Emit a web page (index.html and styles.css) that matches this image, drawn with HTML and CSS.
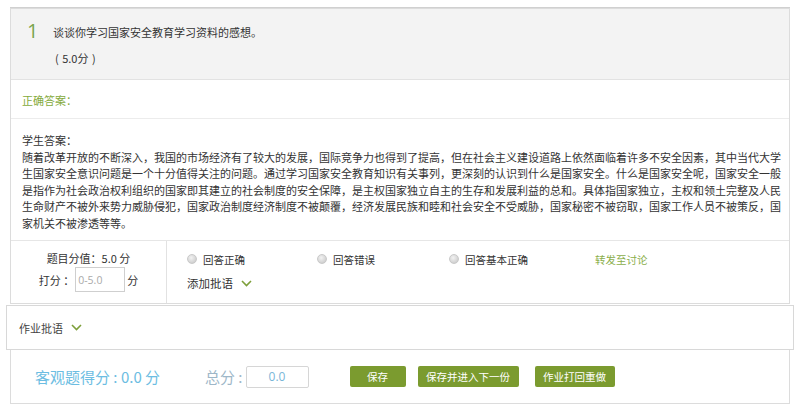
FILE: index.html
```html
<!DOCTYPE html>
<html>
<head>
  <meta charset="utf-8">
  <title>作业批阅</title>
  <link rel="stylesheet" href="styles.css">
</head>
<body>
  <div class="page">
    <div class="card">
      <div class="q-head">
        <span class="q-num">1</span>
        <div class="q-body">
          <p class="q-title">谈谈你学习国家安全教育学习资料的感想。</p>
          <p class="q-score">( 5.0分 )</p>
        </div>
      </div>

      <div class="answer-right">正确答案：</div>

      <div class="answer-stu">
        <p>学生答案：</p>
        <p>随着改革开放的不断深入，我国的市场经济有了较大的发展，国际竞争力也得到了提高，但在社会主义建设道路上依然面临着许多不安全因素，其中当代大学生国家安全意识问题是一个十分值得关注的问题。通过学习国家安全教育知识有关事列，更深刻的认识到什么是国家安全。什么是国家安全呢，国家安全一般是指作为社会政治权利组织的国家即其建立的社会制度的安全保障，是主权国家独立自主的生存和发展利益的总和。具体指国家独立，主权和领土完整及人民生命财产不被外来势力威胁侵犯，国家政治制度经济制度不被颠覆，经济发展民族和睦和社会安全不受威胁，国家秘密不被窃取，国家工作人员不被策反，国家机关不被渗透等等。</p>
      </div>

      <div class="grade-row">
        <div class="grade-left">
          <div>题目分值：5.0 分</div>
          <div class="score-line">
            <span>打分 ：</span>
            <input class="score-input" type="text" placeholder="0-5.0">
            <span>分</span>
          </div>
        </div>
        <div class="grade-right">
          <div class="radio-line">
            <label class="radio-item r1"><span class="radio"></span>回答正确</label>
            <label class="radio-item r2"><span class="radio"></span>回答错误</label>
            <label class="radio-item r3"><span class="radio"></span>回答基本正确</label>
            <a class="link-green" href="#">转发至讨论</a>
          </div>
          <div class="add-comment">
            添加批语
            <svg width="11" height="7" viewBox="0 0 11 7"><polyline points="1,1 5.5,5.5 10,1" fill="none" stroke="#7d9f3a" stroke-width="1.6"/></svg>
          </div>
        </div>
      </div>
    </div>

    <div class="comment-box">
      作业批语
      <svg width="11" height="7" viewBox="0 0 11 7"><polyline points="1,1 5.5,5.5 10,1" fill="none" stroke="#7d9f3a" stroke-width="1.6"/></svg>
    </div>

    <div class="footer">
      <span class="obj-score">客观题得分 : 0.0 分</span>
      <span class="total-label">总分 :</span>
      <input class="total-input" type="text" value="0.0">
      <button class="button b-save">保存</button>
      <button class="button b-next">保存并进入下一份</button>
      <button class="button b-back">作业打回重做</button>
    </div>
  </div>
</body>
</html>
```

FILE: styles.css
```css
/* Base */
body {
  margin: 0;
  padding: 0;
  background: #ffffff;
  font-family: "Noto Sans CJK SC", "Noto Sans", sans-serif;
  font-size: 11px;
  color: #333;
}

p {
  margin: 0;
}

.page {
  padding: 8px 10px 0 10px;
}

/* Question card */
.card {
  border: 1px solid #dcdcdc;
  box-shadow: 0 -1px 0 #d0d0d0;
}

.q-head {
  display: flex;
  background-color: #f3f3f3;
  border-bottom: 1px solid #e2e2e2;
  padding: 12px 0 0 16px;
  height: 58px;
}

.q-num {
  font-family: "Open Sans", sans-serif;
  font-size: 20px;
  color: #7aa54e;
  width: 26px;
  line-height: 20px;
}

.q-title {
  line-height: 20px;
  padding-top: 1px;
}

.q-score {
  line-height: 20px;
  margin-top: 6px;
  margin-left: 2px;
  word-spacing: 1px;
}

.answer-right {
  color: #84aa3c;
  padding: 0 11px;
  height: 38px;
  line-height: 41px;
  border-bottom: 1px solid #ececec;
}

.answer-stu {
  padding: 13px 4px 9px 11px;
  line-height: 16.5px;
  color: #333;
}

/* Grading row */
.grade-row {
  display: flex;
  border-top: 1px solid #e6e6e6;
  height: 62px;
}

.grade-left {
  width: 155px;
  border-right: 1px solid #e2e2e2;
  text-align: center;
  padding-top: 9px;
  font-size: 11px;
}

.score-line {
  display: flex;
  align-items: center;
  justify-content: center;
  margin-top: 1px;
}

.score-input {
  width: 44px;
  height: 23px;
  margin: 0 2px 0 1px;
  padding: 0 2px;
  border: 1px solid #cfcfcf;
  font-family: "Open Sans", sans-serif;
  font-size: 10.5px;
  color: #999;
}

.score-input::placeholder {
  color: #aaa;
}

.grade-right {
  padding: 10px 0 0 20px;
  flex: 1;
}

.radio-line {
  display: flex;
  align-items: center;
  height: 16px;
}

.radio-item {
  display: flex;
  align-items: center;
  font-size: 10.5px;
}

.r1 { width: 130px; }
.r2 { width: 132px; }
.r3 { width: 146px; }

.radio {
  width: 8px;
  height: 8px;
  border-radius: 50%;
  background: radial-gradient(circle at 40% 35%, #f2f2f2, #c4c4c4);
  border: 1px solid #c9c9c9;
  margin-right: 6px;
}

.link-green {
  color: #8aae4a;
  text-decoration: none;
  font-size: 10.5px;
}

.add-comment {
  margin-top: 8px;
  font-size: 11.5px;
  display: flex;
  align-items: center;
}

.add-comment svg,
.comment-box svg {
  margin-left: 8px;
}

/* Homework comment */
.comment-box {
  margin: 1px -4px 0 -4px;
  border: 1px solid #d8d8d8;
  height: 43px;
  padding-left: 12px;
  display: flex;
  align-items: center;
  font-size: 11px;
  color: #444;
}

/* Footer */
.footer {
  border: 1px solid #dcdcdc;
  border-top: none;
  height: 53px;
  display: flex;
  align-items: center;
  padding-left: 24px;
}

.obj-score {
  font-size: 15px;
  color: #6cbde2;
  width: 170px;
}

.total-label {
  font-size: 15px;
  color: #9eb7c8;
  margin-right: 3px;
}

.total-input {
  width: 61px;
  height: 20px;
  padding: 0;
  border: 1px solid #d6d6d6;
  border-radius: 2px;
  text-align: center;
  font-family: "Open Sans", sans-serif;
  font-size: 12px;
  color: #7ab6d8;
}

.button {
  background-color: #7b9b2f;
  color: #ffffff;
  border: none;
  border-radius: 2px;
  height: 21px;
  padding: 0;
  font-family: "Noto Sans CJK SC", sans-serif;
  font-size: 10.5px;
  cursor: pointer;
}

.b-save {
  width: 56px;
  margin-left: 41px;
}

.b-next {
  width: 101px;
  margin-left: 12px;
}

.b-back {
  width: 80px;
  margin-left: 16px;
}
```
